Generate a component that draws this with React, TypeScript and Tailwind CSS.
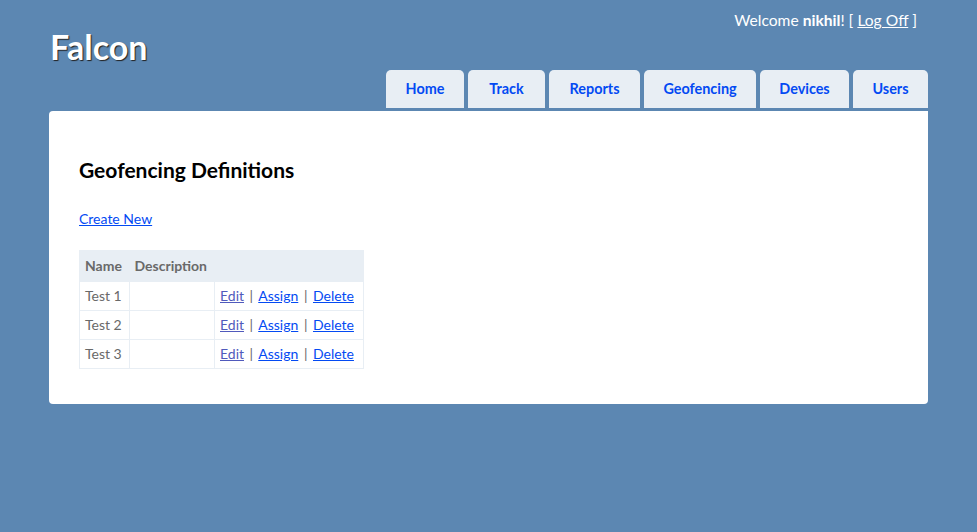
import React from 'react';

const tabs = [
  { name: 'Home', w: 'w-[78px]' },
  { name: 'Track', w: 'w-[77px]' },
  { name: 'Reports', w: 'w-[91px]' },
  { name: 'Geofencing', w: 'w-[112px]' },
  { name: 'Devices', w: 'w-[89px]' },
  { name: 'Users', w: 'w-[75px]' },
];

const rows = ['Test 1', 'Test 2', 'Test 3'];

const App = () => {
  return (
    <div className="min-h-screen bg-[#5c87b2] font-['Lato','Liberation_Sans',sans-serif] text-[14px] text-[#696969]">
      <div className="mx-auto w-[879px]">
        {/* Header */}
        <header>
          <div className="flex h-[70px] justify-between">
            <h1 className="pl-[1px] pt-[26px] text-[34px] font-bold leading-[42px] text-white [text-shadow:1px_1px_1px_#222]">
              Falcon
            </h1>
            <div className="pr-[11px] pt-[10px] text-[15.6px] leading-[20px] text-white">
              Welcome <b>nikhil</b>! [ <a href="#" className="underline">Log Off</a> ]
            </div>
          </div>
          <nav className="flex justify-end gap-[4px] pb-[3px]">
            {tabs.map((t) => (
              <a
                key={t.name}
                href="#"
                className={`${t.w} flex h-[38px] items-center justify-center rounded-t-[5px] bg-[#e8eef4] text-[14.4px] font-bold text-[#034af3]`}
              >
                {t.name}
              </a>
            ))}
          </nav>
        </header>

        {/* Main */}
        <main className="rounded-b-[4px] rounded-tl-[4px] bg-white px-[30px] pb-[35px] pt-[30px]">
          <h2 className="mt-[15px] text-[21px] font-bold leading-[28px] text-black">Geofencing Definitions</h2>
          <p className="mt-[25px] leading-[20px]">
            <a href="#" className="text-[#034af3] underline">Create New</a>
          </p>
          <table className="mt-[21px] w-[284px] table-fixed border-collapse border border-[#e8eef4]">
            <thead>
              <tr className="bg-[#e8eef4]">
                <th className="w-[50px] px-[5px] py-[6px] text-left font-bold leading-[18px]">Name</th>
                <th className="w-[85px] px-[5px] py-[6px] text-left font-bold leading-[18px]">Description</th>
                <th className="w-[149px] px-[5px] py-[6px]"></th>
              </tr>
            </thead>
            <tbody>
              {rows.map((r) => (
                <tr key={r}>
                  <td className="border border-[#e8eef4] px-[5px] py-[5px] leading-[18px]">{r}</td>
                  <td className="border border-[#e8eef4] px-[5px] py-[5px] leading-[18px]"></td>
                  <td className="whitespace-nowrap border border-[#e8eef4] px-[5px] py-[5px] leading-[18px] [word-spacing:2px]">
                    <a href="#" className="text-[#505abc] underline">Edit</a> |{' '}
                    <a href="#" className="text-[#034af3] underline">Assign</a> |{' '}
                    <a href="#" className="text-[#034af3] underline">Delete</a>
                  </td>
                </tr>
              ))}
            </tbody>
          </table>
        </main>
      </div>
    </div>
  );
};

export default App;
